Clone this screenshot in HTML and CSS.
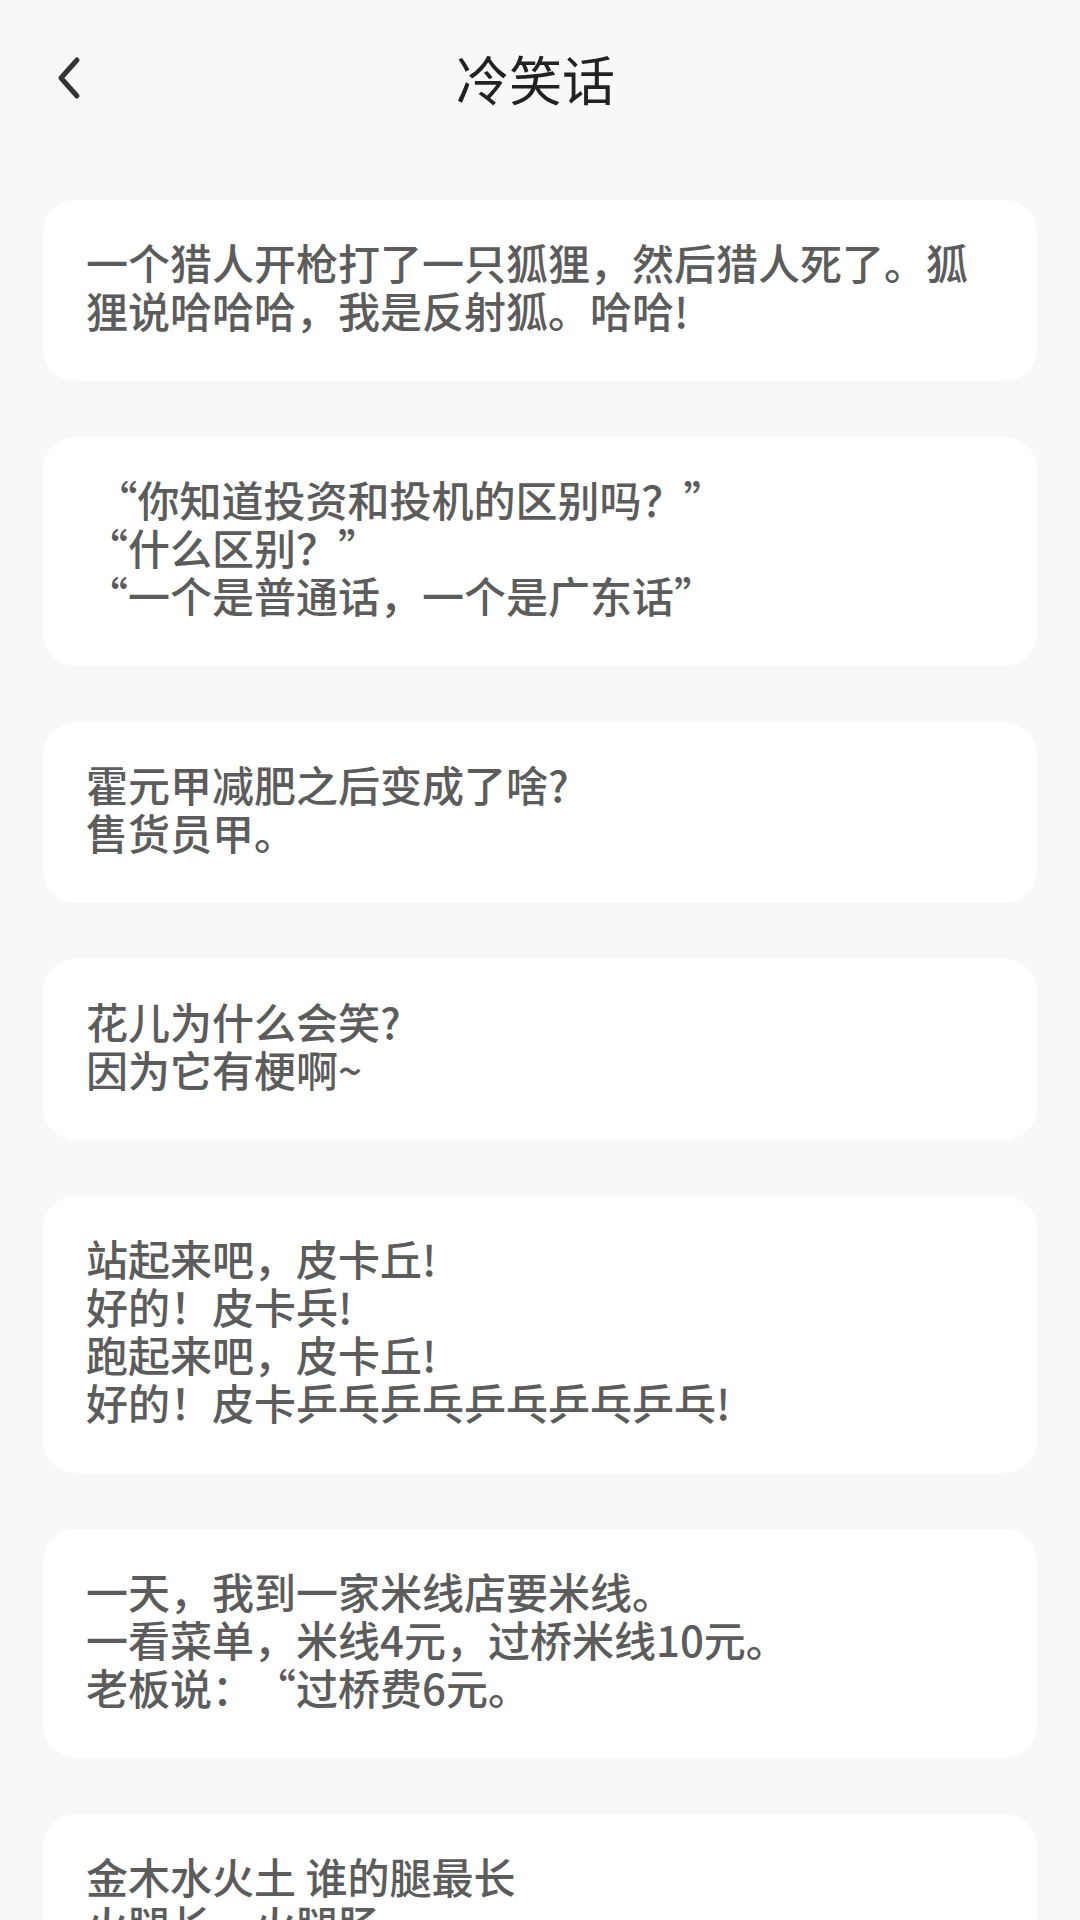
FILE: index.html
```html
<!DOCTYPE html>
<html lang="zh-CN">

<head>
    <meta charset="UTF-8">
    <meta name="viewport" content="width=device-width, initial-scale=1.0">
    <title>冷笑话</title>
    <link rel="stylesheet" href="styles.css">
</head>

<body>
    <div class="page">
        <div class="header">
            <div class="back">
                <svg width="40" height="48" viewBox="0 0 40 48">
                    <polyline points="25,6 9,24 25,42" fill="none" stroke="#333" stroke-width="5"
                        stroke-linecap="round" stroke-linejoin="round" />
                </svg>
            </div>
            <div class="title">冷笑话</div>
        </div>

        <div class="list">
            <div class="card">一个猎人开枪打了一只狐狸，然后猎人死了。狐狸说哈哈哈，我是反射狐。哈哈!</div>
            <div class="card"> “你知道投资和投机的区别吗？”
“什么区别？”
“一个是普通话，一个是广东话”</div>
            <div class="card">霍元甲减肥之后变成了啥?
售货员甲。</div>
            <div class="card">花儿为什么会笑?
因为它有梗啊~</div>
            <div class="card">站起来吧，皮卡丘!
好的！皮卡兵!
跑起来吧，皮卡丘!
好的！皮卡乒乓乒乓乒乓乒乓乒乓!</div>
            <div class="card">一天，我到一家米线店要米线。
一看菜单，米线4元，过桥米线10元。
老板说：“过桥费6元。</div>
            <div class="card">金木水火土 谁的腿最长
火腿长，火腿肠</div>
        </div>
    </div>
</body>

</html>
```

FILE: styles.css
```css
* {
    box-sizing: border-box;
}

body {
    margin: 0;
    background-color: #f8f8f8;
    font-family: "Noto Sans CJK SC", "Noto Sans", sans-serif;
}

.page {
    width: 100%;
    height: 100vh;
    overflow: hidden;
}

.header {
    height: 156px;
    display: flex;
    align-items: center;
    justify-content: center;
    position: relative;
}

.back {
    position: absolute;
    left: 52px;
    top: 54px;
    width: 40px;
    height: 48px;
}

.title {
    font-size: 53px;
    color: #222222;
    line-height: 1;
    margin-right: 9px;
}

.list {
    display: flex;
    flex-direction: column;
    gap: 56px;
    padding: 44px 43px;
}

.card {
    background-color: #ffffff;
    border-radius: 32px;
    padding: 38px 43px 47px;
    font-size: 42px;
    font-weight: 500;
    line-height: 48px;
    color: #5c5c5c;
    white-space: pre-wrap;
    text-spacing-trim: space-all;
}
```
